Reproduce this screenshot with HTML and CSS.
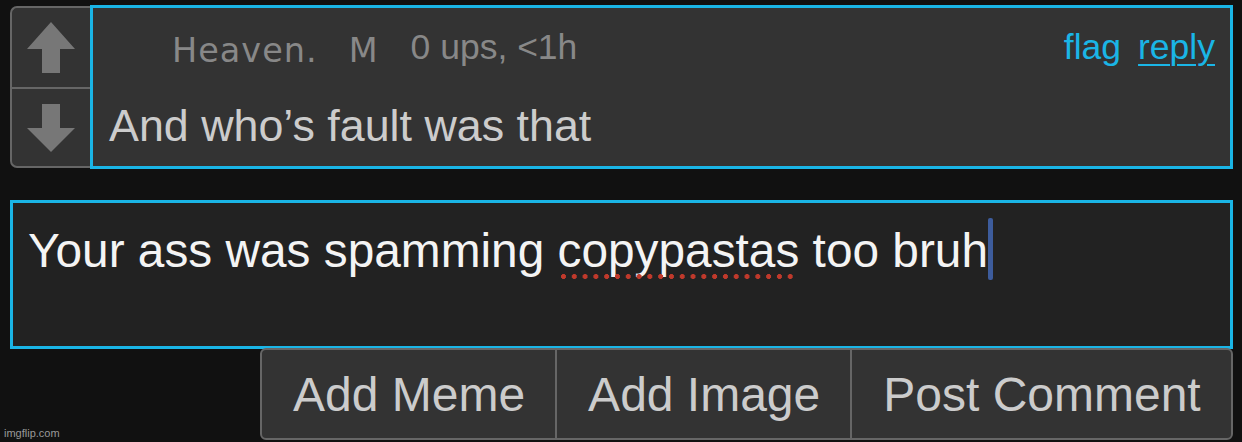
FILE: index.html
```html
<!DOCTYPE html>
<html>
<head>
<meta charset="utf-8">
<link rel="stylesheet" href="styles.css">
</head>
<body>
<div class="page">
  <div class="comment">
    <div class="vote">
      <div class="vote-btn up">
        <svg width="48" height="51" viewBox="0 0 48 51"><polygon points="24,0 48,27 33,27 33,51 15,51 15,27 0,27" fill="#777"/></svg>
      </div>
      <div class="vote-btn down">
        <svg width="48" height="48" viewBox="0 0 48 48"><polygon points="15,0 33,0 33,24 48,24 24,48 0,24 15,24" fill="#777"/></svg>
      </div>
    </div>
    <div class="com-body">
      <div class="com-head">
        <div class="head-left">
          <span class="user">Heaven.</span><span class="badge">M</span><span class="meta">0 ups, &lt;1h</span>
        </div>
        <div class="actions">
          <a class="act">flag</a><a class="act reply">reply</a>
        </div>
      </div>
      <div class="com-text">And who’s fault was that</div>
    </div>
  </div>

  <div class="reply-box">
    <div class="textarea">Your ass was spamming <span class="typo">copypastas</span> too bruh<span class="caret"></span></div>
    <div class="btns">
      <div class="btn">Add Meme</div>
      <div class="btn">Add Image</div>
      <div class="btn">Post Comment</div>
    </div>
  </div>

  <div class="wm">imgflip.com</div>
</div>
</body>
</html>
```

FILE: styles.css
```css
html, body {
  margin: 0;
  padding: 0;
  background: #111111;
}
body {
  width: 1242px;
  height: 442px;
  overflow: hidden;
  font-family: "Liberation Sans", Arial, sans-serif;
}
.page {
  position: relative;
  height: 442px;
  padding: 5px 9px 0 10px;
  box-sizing: border-box;
}
.comment {
  display: flex;
  align-items: center;
  width: 1223px;
}
.vote {
  width: 80px;
  height: 162px;
  box-sizing: border-box;
  background: #333333;
  border: 2px solid #666666;
  border-right: none;
  border-radius: 7px 0 0 7px;
  display: flex;
  flex-direction: column;
}
.vote-btn {
  display: flex;
  align-items: center;
  justify-content: center;
}
.vote-btn.up {
  height: 79px;
  border-bottom: 2px solid #666666;
}
.vote-btn.down {
  flex: 1;
}
.vote-btn svg { display: block; }
.com-body {
  flex: 1;
  height: 164px;
  box-sizing: border-box;
  border: 3px solid #1ab5e6;
  background: #333333;
  padding: 17px 15px 0 16px;
}
.com-head {
  display: flex;
  justify-content: space-between;
  align-items: flex-start;
  height: 44px;
  line-height: 44px;
}
.head-left {
  font-size: 35px;
  color: #888888;
  white-space: nowrap;
}
.user, .badge {
  font-family: "DejaVu Sans", Verdana, sans-serif;
  font-size: 33.5px;
  letter-spacing: 1px;
  vertical-align: -3px;
}
.user { margin-left: 63px; }
.badge { margin-left: 31px; }
.meta {
  margin-left: 32px;
  font-size: 35.5px;
}
.actions {
  font-size: 35.5px;
  color: #1ab5e6;
  white-space: nowrap;
}
.act { color: #1ab5e6; }
.reply {
  margin-left: 17px;
  text-decoration: underline;
  text-underline-offset: 5px;
  text-decoration-thickness: 2px;
}
.com-text {
  margin-top: 30px;
  font-size: 44.8px;
  line-height: 52px;
  color: #cccccc;
  white-space: nowrap;
}
.reply-box {
  margin-top: 31px;
}
.textarea {
  width: 1223px;
  height: 149px;
  box-sizing: border-box;
  border: 3px solid #1ab5e6;
  background: #222222;
  padding: 15px 15px 0 15px;
  font-size: 47.8px;
  line-height: 56px;
  color: #f4f4f4;
  white-space: nowrap;
}
.typo {
  position: relative;
}
.typo::after {
  content: "";
  position: absolute;
  left: 3px;
  right: 4px;
  bottom: -2px;
  height: 5px;
  background-image: radial-gradient(circle at 2.5px 2.5px, #c0392b 2.2px, transparent 2.7px);
  background-size: 10.8px 5px;
  background-repeat: repeat-x;
}
.caret {
  display: inline-block;
  width: 5px;
  height: 62px;
  margin-left: 0;
  background: #3d5c9c;
  border-radius: 2px;
  vertical-align: -13px;
}
.btns {
  display: flex;
  margin-left: 250px;
  margin-top: -1px;
  width: max-content;
  height: 92px;
  box-sizing: border-box;
  border: 2px solid #666666;
  border-radius: 6px;
  background: #333333;
  overflow: hidden;
}
.btn {
  display: flex;
  align-items: center;
  padding: 0 30px 0 31px;
  font-size: 48px;
  color: #cccccc;
  white-space: nowrap;
}
.btn + .btn {
  border-left: 2px solid #666666;
}
.wm {
  position: absolute;
  left: 4px;
  bottom: 3px;
  font-size: 11px;
  color: #999999;
}
```
